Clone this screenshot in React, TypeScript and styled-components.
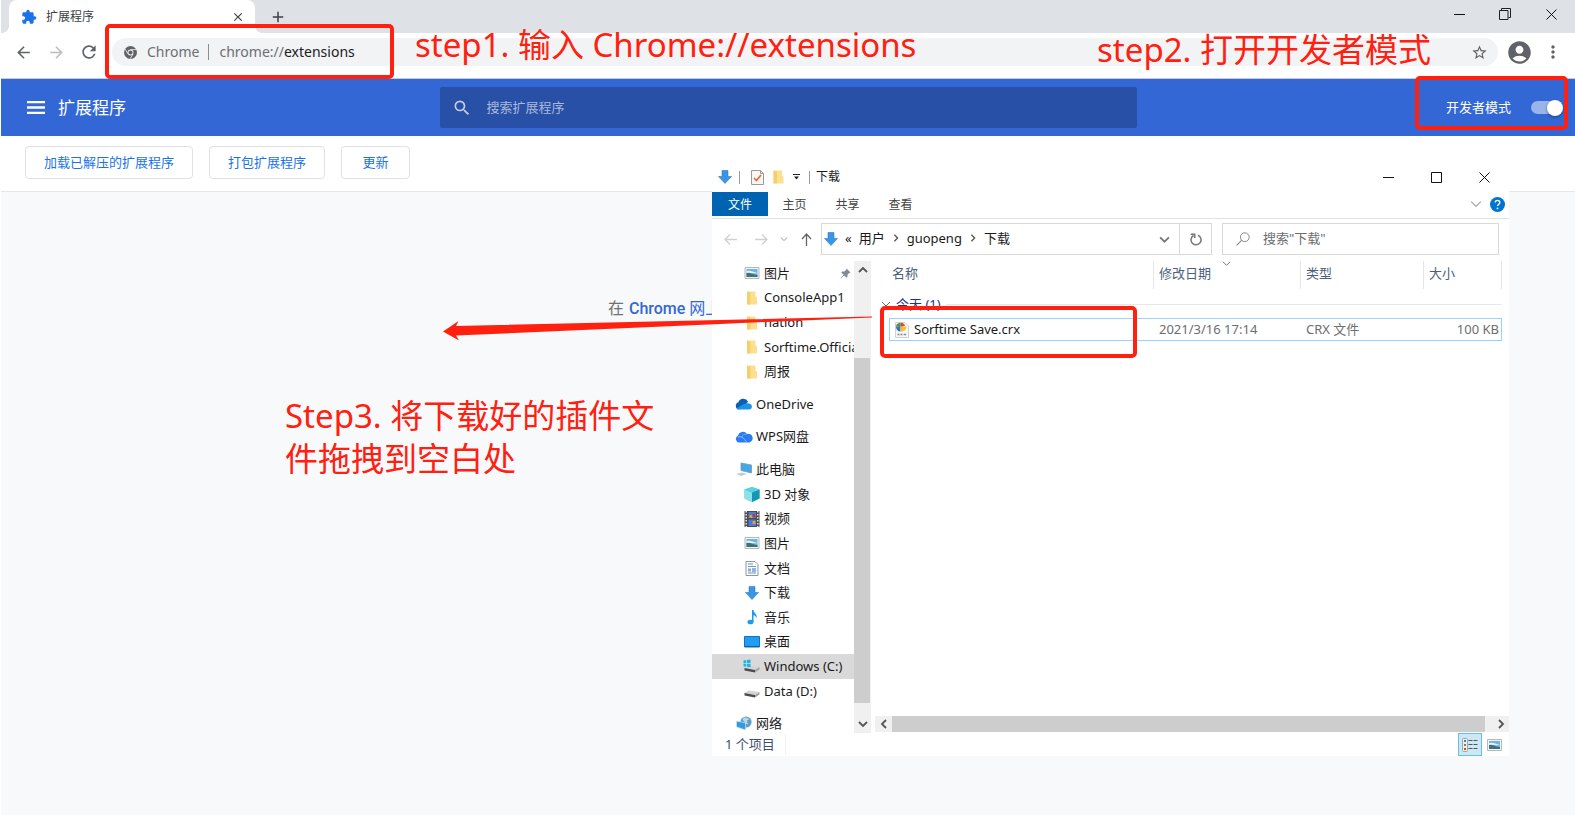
import React from "react";
import styled, { createGlobalStyle } from "styled-components";
import {
  MdExtension, MdArrowBack, MdArrowForward, MdRefresh, MdStarBorder,
  MdAccountCircle, MdMoreVert, MdSearch, MdClose, MdAdd,
} from "react-icons/md";

const RED = "#ff2010";

const GlobalStyle = createGlobalStyle`
  *, *::before, *::after { box-sizing: border-box; }
  body {
    margin: 0;
    background: #f8f9fb;
    font-family: "Noto Sans", "Noto Sans CJK SC", sans-serif;
    font-size: 13px;
    line-height: 20px;
    overflow-x: hidden;
  }
  button, input { font: inherit; }
  a { color: inherit; text-decoration: none; }
  ul { list-style: none; margin: 0; padding: 0; }
  svg { display: block; flex: none; }
`;

const Page = styled.div`
  position: relative;
  min-height: 100vh;
  border-left: 1px solid #fff;
  overflow: hidden;
`;

const PlainButton = styled.button`
  display: flex;
  align-items: center;
  justify-content: center;
  padding: 0;
  border: 0;
  background: none;
  color: inherit;
`;

/* ---------- browser frame ---------- */

const TabStrip = styled.div`
  display: flex;
  height: 33px;
  padding: 0 1px 0 8px;
  background: #dee1e6;
`;

const Tab = styled.div`
  position: relative;
  display: flex;
  align-items: center;
  gap: 9px;
  width: 246px;
  padding: 0 10px 0 12px;
  border-radius: 8px 8px 0 0;
  background: #fff;
  color: #3c4043;
  font-size: 12px;
  &::before, &::after {
    content: "";
    position: absolute;
    bottom: 0;
    width: 8px;
    height: 8px;
  }
  &::before { left: -8px; background: radial-gradient(circle at 0 0, transparent 8px, #fff 8px); }
  &::after { right: -8px; background: radial-gradient(circle at 100% 0, transparent 8px, #fff 8px); }
`;

const TabTitle = styled.span`
  flex: 1;
`;

const NewTab = styled(PlainButton)`
  width: 28px;
  margin-left: 9px;
  color: #3c4043;
`;

const WindowButtons = styled.div<{ $cell: number }>`
  display: flex;
  margin-left: auto;
  button { width: ${(p) => p.$cell}px; height: 28px; }
`;

const Toolbar = styled.div`
  display: flex;
  align-items: center;
  height: 46px;
  padding: 0 12px 7px 12px;
  border-bottom: 1px solid #c9cbd2;
  background: #fff;
  color: #5f6368;
`;

const NavButton = styled(PlainButton)<{ $off?: boolean }>`
  width: 20px;
  height: 28px;
  margin-right: 13px;
  color: ${(p) => (p.$off ? "#bcbec2" : "#5f6368")};
`;

const Omnibox = styled.div`
  display: flex;
  flex: 1;
  align-items: center;
  height: 28px;
  padding: 0 10px 0 12px;
  border-radius: 14px;
  background: #f1f3f4;
  font-size: 14px;
`;

const SiteName = styled.span`
  margin-left: 10px;
  padding-right: 9px;
  border-right: 1px solid #8a8d91;
  color: #6b6f73;
  line-height: 16px;
`;

const Url = styled.span`
  flex: 1;
  margin-left: 10px;
  color: #6b6f73;
  b { color: #202124; font-weight: 400; }
`;

const AccountButton = styled(PlainButton)`
  margin: 0 10px 0 8px;
`;

/* ---------- extensions page ---------- */

const Header = styled.header`
  display: flex;
  align-items: center;
  height: 57px;
  padding: 0 15px;
  background: #3367d6;
  color: #fff;
`;

const HeaderSide = styled.div`
  display: flex;
  flex: 1;
  align-items: center;
`;

const MenuButton = styled(PlainButton)`
  margin: 0 13px 0 11px;
`;

const PageTitle = styled.h1`
  margin: 0;
  font-size: 17px;
  font-weight: 400;
  line-height: 24px;
`;

const SearchBox = styled.label`
  display: flex;
  flex: 0 1 697px;
  align-items: center;
  gap: 15px;
  height: 41px;
  padding: 0 12px;
  border-radius: 2px;
  background: #2850a7;
  color: #c3cfe8;
  input {
    flex: 1;
    min-width: 0;
    padding: 0 0 2px;
    border: 0;
    outline: 0;
    background: none;
    color: #fff;
  }
  input::placeholder { color: #a9b9dc; opacity: 1; }
`;

const DevMode = styled.label`
  display: flex;
  align-items: center;
  gap: 20px;
  margin-left: auto;
  span { padding-bottom: 2px; }
`;

const Switch = styled.input`
  appearance: none;
  display: flex;
  align-items: center;
  justify-content: flex-end;
  width: 29px;
  height: 13px;
  margin: 0;
  border-radius: 7px;
  background: #99b3eb;
  &::before {
    content: "";
    width: 16px;
    height: 16px;
    margin-right: -3px;
    border-radius: 50%;
    background: #fff;
    box-shadow: 0 1px 3px rgba(0, 0, 0, 0.4);
    flex: none;
  }
`;

const Actions = styled.div`
  display: flex;
  gap: 16px;
  height: 56px;
  padding: 10px 24px;
  border-bottom: 1px solid #e5e6e8;
  background: #fff;
`;

const ActionButton = styled.button`
  min-width: 69px;
  height: 33px;
  padding: 0 18px 2px;
  border: 1px solid #dfe1e5;
  border-radius: 4px;
  background: #fff;
  color: #1a73e8;
`;

const Empty = styled.p`
  width: 360px;
  margin: 105px auto 0;
  color: #6e7175;
  font-family: Roboto, "Noto Sans CJK SC", sans-serif;
  font-size: 16px;
  line-height: 24px;
  a { margin-left: 1px; color: #3367d6; font-weight: 500; }
  a span { font-weight: 400; }
`;

/* ---------- file manager window ---------- */

const Explorer = styled.section`
  position: absolute;
  left: 711px;
  top: 160px;
  width: 797px;
  background: #fff;
  color: #1a1a1a;
`;

const TitleBar = styled.div`
  display: flex;
  align-items: center;
  height: 32px;
  padding: 2px 1px 0 6px;
`;

const Divider = styled.i`
  width: 1px;
  height: 13px;
  background: #9a9a9a;
`;

const QuickTools = styled.div`
  display: flex;
  align-items: center;
  gap: 9px;
  margin: 0 9px 0 7px;
  i { margin-right: 2px; }
`;

const WindowTitle = styled.span`
  margin-left: 6px;
  font-size: 12px;
`;

const Ribbon = styled.nav`
  display: flex;
  align-items: center;
  height: 27px;
  padding: 0 4px 2px 0;
  border-bottom: 1px solid #e2e2e2;
  color: #444;
`;

const RibbonTab = styled(PlainButton)<{ $active?: boolean }>`
  width: ${(p) => (p.$active ? 56 : 53)}px;
  height: 24px;
  padding-top: 2px;
  background: ${(p) => (p.$active ? "#0063b1" : "none")};
  color: ${(p) => (p.$active ? "#fff" : "#444")};
  font-size: 12px;
`;

const RibbonEnd = styled.div`
  display: flex;
  align-items: center;
  gap: 8px;
  margin-left: auto;
`;

const AddressRow = styled.div`
  display: flex;
  align-items: center;
  padding: 4px 10px 6px 12px;
`;

const History = styled.div`
  display: flex;
  align-items: center;
  width: 97px;
  gap: 12px;
  svg:first-child { margin-right: 6px; }
`;

const AddressBox = styled.div`
  display: flex;
  flex: 1;
  align-items: center;
  height: 32px;
  padding-left: 2px;
  border: 1px solid #d9d9d9;
  span { padding-bottom: 2px; }
`;

const Crumb = styled.span`
  margin: 0 7px;
`;

const RefreshButton = styled(PlainButton)`
  width: 32px;
  height: 30px;
  margin-left: 9px;
  border-left: 1px solid #d9d9d9;
`;

const FolderSearch = styled.label`
  display: flex;
  align-items: center;
  gap: 13px;
  width: 277px;
  height: 32px;
  margin-left: 10px;
  padding: 0 13px;
  border: 1px solid #d9d9d9;
  input { flex: 1; min-width: 0; padding: 0 0 2px; border: 0; outline: 0; }
  input::placeholder { color: #6d6d6d; opacity: 1; }
`;

const Panes = styled.div`
  display: flex;
  height: 472px;
`;

const Tree = styled.nav`
  width: 142px;
  overflow: hidden;
`;

const TreeList = styled.ul`
  display: flex;
  flex-direction: column;
  height: 475px;
`;

const TreeItem = styled.li<{ $top?: boolean; $selected?: boolean }>`
  flex: 1;
  display: flex;
  align-items: center;
  margin-top: ${(p) => (p.$top ? 8 : 0)}px;
  background: ${(p) => (p.$selected ? "#d9d9d9" : "none")};
  a {
    display: flex;
    flex: 1;
    align-items: center;
    gap: 3px;
    min-width: 0;
    padding-left: ${(p) => (p.$top ? 23 : 31)}px;
    white-space: nowrap;
  }
  a span { padding-bottom: 1px; }
  a > svg:first-child { width: 18px; }
  a > svg:last-child { margin: 0 3px 0 auto; }
`;

const VScroll = styled.div`
  display: flex;
  flex-direction: column;
  width: 17px;
  background: #f0f0f0;
  button { height: 18px; }
`;

const VThumb = styled.div`
  height: 345px;
  margin: 79px 1px 0 0;
  background: #cdcdcd;
`;

const Content = styled.div`
  display: flex;
  flex: 1;
  flex-direction: column;
  min-width: 0;
  padding-left: 4px;
`;

const TableArea = styled.div`
  flex: 1;
  padding: 0 7px 0 14px;
`;

const FileTable = styled.table`
  width: 100%;
  table-layout: fixed;
  border-spacing: 0;
  th, td { padding: 0 0 0 5px; text-align: left; font-weight: 400; }
`;

const ColumnHead = styled.th<{ $w?: number }>`
  position: relative;
  width: ${(p) => (p.$w ? p.$w + "px" : "auto")};
  height: 28px;
  border-right: 1px solid #e5e5e5;
  color: #4c607a;
  line-height: 24px;
  vertical-align: top;
  &:first-child { padding-left: 3px; }
  svg { position: absolute; left: calc(50% - 5px); top: -2px; }
`;

const GroupCell = styled.td`
  height: 29px;
  color: #1e3287;
  && { padding: 1px 0 0; }
`;

const GroupLabel = styled.div`
  display: flex;
  align-items: center;
  gap: 5px;
  margin-left: -8px;
  &::after { content: ""; flex: 1; height: 1px; background: #e8e8e8; }
`;

const FileCell = styled.td<{ $end?: boolean }>`
  height: 23px;
  border: solid #99d1ff;
  border-width: 1px 0;
  color: #6d6d6d;
  line-height: 21px;
  &:first-child { border-left-width: 1px; color: #1a1a1a; }
  &:last-child { border-right-width: 1px; }
  && { ${(p) => (p.$end ? "text-align: right; padding-right: 2px;" : "")} }
`;

const FileName = styled.a`
  display: flex;
  align-items: center;
  gap: 5px;
`;

const HScroll = styled.div`
  display: flex;
  height: 16px;
  margin-bottom: 1px;
  background: #f0f0f0;
  button { width: 17px; }
`;

const HThumb = styled.div`
  flex: 1;
  margin-right: 7px;
  background: #cdcdcd;
`;

const StatusBar = styled.footer`
  display: flex;
  align-items: center;
  height: 23px;
  padding: 0 3px 0 13px;
  color: #3b4f6b;
`;

const StatusText = styled.span`
  padding: 0 10px 1px 0;
  border-right: 1px solid #f3f3f3;
`;

const ViewButton = styled(PlainButton)<{ $active?: boolean }>`
  width: 24px;
  height: 23px;
  border: ${(p) => (p.$active ? "1px solid #66c0e0" : "0")};
  background: ${(p) => (p.$active ? "#cce8f6" : "none")};
`;

const Spacer = styled.span`
  flex: 1;
`;

/* ---------- tutorial marks drawn over the page ---------- */

const Mark = styled.div`
  position: absolute;
  border: 4px solid ${RED};
  border-radius: 5px;
  pointer-events: none;
`;
const AddressMark = styled(Mark)`left: 104px; top: 24px; width: 289px; height: 55px;`;
const SwitchMark = styled(Mark)`right: 7px; top: 76px; width: 153px; height: 54px;`;
const FileMark = styled(Mark)`left: 879px; top: 306px; width: 257px; height: 52px;`;

const Note = styled.p`
  position: absolute;
  margin: 0;
  color: ${RED};
  font-size: 33px;
  line-height: 43px;
  white-space: nowrap;
`;
const AddressNote = styled(Note)`left: 414px; top: 23px;`;
const SwitchNote = styled(Note)`right: 144px; top: 28px;`;
const DragNote = styled(Note)`left: 284px; top: 394px;`;

const DragArrow = styled.svg`
  position: absolute;
  left: 441px;
  top: 315px;
`;

/* ---------- icons ---------- */

const ChromeGlyph = () => (
  <svg width="13" height="13" viewBox="0 0 24 24">
    <circle cx="12" cy="12" r="12" fill="#5f6368" />
    <circle cx="12" cy="12" r="5.4" fill="#f1f3f4" />
    <circle cx="12" cy="12" r="3.8" fill="#5f6368" />
    <path d="M12 6.6h11M7.3 14.7 2 5.6M16.7 14.7l-5.2 9" stroke="#f1f3f4" strokeWidth="1.5" fill="none" />
  </svg>
);

const Burger = () => (
  <svg width="18" height="13" viewBox="0 0 18 13" fill="#fff">
    <path d="M0 0h18v2.300H0zM0 5.300h18v2.400H0zM0 10.700h18V13H0z" />
  </svg>
);

const Minimize = () => (
  <svg width="11" height="11" viewBox="0 0 11 11"><path d="M0 5.500h11" stroke="#111" /></svg>
);
const Maximize = () => (
  <svg width="11" height="11" viewBox="0 0 11 11"><path d="M.5.5h10v10H.5z" fill="none" stroke="#111" /></svg>
);
const Restore = () => (
  <svg width="12" height="12" viewBox="0 0 12 12"><path d="M.5 2.500h8.500v9H.5zM2.500 2V.5h9v9H9.500" fill="none" stroke="#222" /></svg>
);
const Cross = () => (
  <svg width="11" height="11" viewBox="0 0 11 11"><path d="M.5.5l10 10M10.500.5l-10 10" stroke="#111" fill="none" /></svg>
);

type ChevronProps = { dir: "up" | "down" | "left" | "right"; size?: number; color?: string; weight?: number };

const Chevron = ({ dir, size = 8, color = "#555", weight = 1.3 }: ChevronProps) => {
  const d = { down: "M1 3l4 4 4-4", up: "M1 7l4-4 4 4", left: "M7 1L3 5l4 4", right: "M3 1l4 4-4 4" }[dir];
  return (
    <svg width={size} height={size} viewBox="0 0 10 10"><path d={d} fill="none" stroke={color} strokeWidth={(weight * 10) / size} /></svg>
  );
};

const LongArrow = ({ d, color }: { d: string; color: string }) => (
  <svg width="13" height="13" viewBox="0 0 13 13"><path d={d} fill="none" stroke={color} strokeWidth="1.3" /></svg>
);

const DownArrow = () => (
  <svg width="14" height="14" viewBox="0 0 14 14">
    <path d="M4 .5h6v6h3.500L7 13.500.5 6.500H4z" fill="#3d94e0" stroke="#2a7fcb" strokeWidth=".6" />
  </svg>
);

const Checklist = () => (
  <svg width="13" height="15" viewBox="0 0 13 15">
    <path d="M.5.5h9l3 3v11H.5z" fill="#f6f6f6" stroke="#9a9a9a" />
    <path d="M9.500.5v3h3" fill="none" stroke="#9a9a9a" />
    <path d="M3 8l2.500 2.500L10 5" fill="none" stroke="#f0692c" strokeWidth="1.700" />
  </svg>
);

const Folder = () => (
  <svg width="11" height="14" viewBox="0 0 11 14">
    <path d="M.5.500h8.500v5l1.500 1v7H.5z" fill="#fbe08f" />
    <path d="M.5.5 4 1.500v12H.5z" fill="#f5cf6d" />
  </svg>
);

const Picture = () => (
  <svg width="15" height="12" viewBox="0 0 15 12">
    <path d="M.5.5h14v11H.5z" fill="#f4f4f4" stroke="#b3b9bf" />
    <path d="M2 2h11v8H2z" fill="#6fb4e8" />
    <path d="M2 6c3-1 5 1.500 11 2v2H2z" fill="#3f7373" />
    <path d="M2 4.200c3-1.400 6 .3 11 1.800-4 .6-8-.6-11 0z" fill="#e8f3fa" />
  </svg>
);

const OneDrive = () => (
  <svg width="18" height="12" viewBox="0 0 18 12">
    <path d="M4 11.500a3.700 3.700 0 0 1-.6-7.200A5.300 5.300 0 0 1 13 3.500l-3 4.500z" fill="#0a5fb8" />
    <path d="M1.500 10.500 8 6.500c2-1 4-2 7-.8a3 3 0 0 1-.7 5.800H4a3.700 3.700 0 0 1-2.500-1z" fill="#1c93e6" />
  </svg>
);

const WpsCloud = () => (
  <svg width="18" height="12" viewBox="0 0 18 12">
    <path d="M4 11.500A3.500 3.500 0 0 1 3 4.800 5 5 0 0 1 12 3a4.300 4.300 0 0 1 2.500 8.500z" fill="#2a7cf0" />
    <path d="M3 6c3-1 5 .5 6.500 2.500L11.500 11" fill="none" stroke="#a9ccff" strokeWidth=".8" />
    <path d="M6.500 6c1-2 3-3 5.500-3" fill="none" stroke="#7fb2fb" strokeWidth=".8" />
  </svg>
);

const Computer = () => (
  <svg width="18" height="15" viewBox="0 0 18 15">
    <path d="M6 1l10.500 2v8L6 8.500z" fill="#3fa9ea" stroke="#8496a3" strokeWidth=".8" />
    <path d="M1 12l6-1.500 5 1.500-6 2z" fill="#c5cbd0" />
  </svg>
);

const Cube = () => (
  <svg width="16" height="15" viewBox="0 0 16 15">
    <path d="M8 0l7.500 2.500v9L8 15 .5 11.500v-9z" fill="#2fc3d6" />
    <path d="M8 5.500V15L.5 11.500v-9z" fill="#8ae3ea" />
    <path d="M8 5.500V15l7.500-3.500v-9z" fill="#1795b8" />
    <path d="M8 0l7.500 2.500L8 5.500.5 2.500z" fill="#59d3de" />
  </svg>
);

const Film = () => (
  <svg width="15" height="16" viewBox="0 0 15 16">
    <path d="M0 0h15v16H0z" fill="#4b4b4b" />
    <path d="M4 1h7.500v6H4zM4 8.500h7.500V15H4z" fill="#4f79d6" />
    <path d="M5 4h3v3H5zM8 10h3v3H8z" fill="#e1a03c" />
    <path d="M8 3h2.500v3H8z" fill="#c0392b" />
    <path d="M1.700 0v16M13.300 0v16" stroke="#e8e8e8" strokeWidth="1.500" strokeDasharray="1.500 1.500" />
  </svg>
);

const Doc = () => (
  <svg width="13" height="15" viewBox="0 0 13 15">
    <path d="M.5.500h9l3 3v11H.5z" fill="#fafafa" stroke="#8f979e" />
    <path d="M2.500 3h5M2.500 5.500h8M2.500 12h8" stroke="#5d9fd8" />
    <path d="M2.500 7.500h3v3h-3z" fill="#9aa6b0" />
    <path d="M6.500 8h4M6.500 10h4" stroke="#2d6fb8" />
  </svg>
);

const MusicNote = () => (
  <svg width="12" height="15" viewBox="0 0 12 15">
    <ellipse cx="4.500" cy="12" rx="3" ry="2.300" fill="#1a9bf0" />
    <path d="M6 0h1.500c0 3 4 3.500 3 8.500-.5-2-1.500-3-3-3.300V12H6z" fill="#1a9bf0" />
  </svg>
);

const DesktopIcon = () => (
  <svg width="16" height="12" viewBox="0 0 16 12">
    <path d="M.5.5h15v10.500H.5z" fill="#1f9cf3" stroke="#1372bd" />
    <path d="M1 10.500h14" stroke="#0e5c9c" />
  </svg>
);

const Drive = ({ win }: { win?: boolean }) => (
  <svg width="17" height="14" viewBox="0 0 17 14">
    <path d="M1 9l4-2.500 11 1.500-4.500 3z" fill="#d4d4d4" />
    <path d="M1 9l10.500 2v2.500L1 11.500z" fill="#4c4c4c" />
    <path d="M11.500 11 16 8v2.500l-4.500 3z" fill="#a2a2a2" />
    {win && <path d="M0 1.500 2.700 1v3H0zM3.500 1 7 .4V4H3.500zM0 4.700h2.700v3L0 7.300zM3.500 4.700H7v3.600l-3.500-.5z" fill="#19b5e6" />}
  </svg>
);

const Network = () => (
  <svg width="17" height="15" viewBox="0 0 17 15">
    <circle cx="10.500" cy="6" r="5.600" fill="#5f9fc4" />
    <path d="M7 3c2-2 5-2 7 1-3-1-3 3-1 4-2 1-4-1-6-5z" fill="#b7d7e6" />
    <path d="M1 5l9 2v7L1 11z" fill="#2f9be6" stroke="#d8ecf8" strokeWidth=".6" />
  </svg>
);

const Pin = () => (
  <svg width="11" height="11" viewBox="0 0 11 11">
    <path d="M6.500.5l4 4-1.200.4L7.600 6.600l-.2 2.200-.9.900-2.300-2.300L.8 10.500l-.3-.3 3.100-3.400-2.300-2.300.9-.9 2.200-.2L6.100 1.700z" fill="#7f8c99" />
  </svg>
);

const Help = () => (
  <svg width="15" height="15" viewBox="0 0 15 15">
    <circle cx="7.500" cy="7.500" r="7.500" fill="#0074d1" />
    <path d="M5.300 5.500c0-3 4.500-2.700 4.500 0 0 1.700-2.200 1.700-2.200 3.600" fill="none" stroke="#fff" strokeWidth="1.400" />
    <circle cx="7.500" cy="11.400" r=".9" fill="#fff" />
  </svg>
);

const RefreshGlyph = () => (
  <svg width="12" height="13" viewBox="0 0 12 13">
    <path d="M8 2.200a5 5 0 1 1-4.500.3" fill="none" stroke="#777" strokeWidth="1.500" />
    <path d="M.8 1.200h3.900V5" fill="none" stroke="#777" strokeWidth="1.500" />
  </svg>
);

const Lens = () => (
  <svg width="14" height="14" viewBox="0 0 14 14">
    <circle cx="8.800" cy="5.200" r="4.400" fill="none" stroke="#888" />
    <path d="M5.600 8.400.6 13.400" stroke="#888" strokeWidth="1.200" />
  </svg>
);

const CrxFile = () => (
  <svg width="14" height="16" viewBox="0 0 14 16">
    <path d="M.5.500h9.500l3.500 3.500v11.500H.5z" fill="#f7f7f7" stroke="#d0d0d0" />
    <path d="M1 4.500 5.500 5v4.500C3 9.500 1 7.500 1 4.500z" fill="#3a6fd0" />
    <path d="M1 4.500C1 2.500 2.500 1 5.500.8V5z" fill="#3f9a4a" />
    <path d="M5.500.8c2.500-.2 4 1.200 4.500 3L5.500 5z" fill="#d94a35" />
    <path d="M5.500 5 11.500 4.500C11.500 7.500 9 9.500 5.500 9.500z" fill="#f2c230" />
    <path d="M2.500 12.500h2M5.500 12.500h2M8.700 12.500h2.500" stroke="#888" strokeWidth="1.500" />
  </svg>
);

const DetailsView = () => (
  <svg width="16" height="14" viewBox="0 0 16 14">
    <rect x=".5" y=".5" width="5" height="13" rx="1" fill="#eee" stroke="#a5a5a5" />
    <path d="M2 2h2v2H2z" fill="#4a7ec0" />
    <path d="M2 6h2v2H2z" fill="#6c8f4a" />
    <path d="M2 10h2v2H2z" fill="#c0502a" />
    <path d="M6.500 2.500h9M6.500 6.500h9M6.500 10.500h9" stroke="#555" strokeDasharray="4 1" />
  </svg>
);

/* ---------- data ---------- */

type Place = { label: string; icon: React.ReactNode; top?: boolean; selected?: boolean; pinned?: boolean };

const places: Place[] = [
  { label: "图片", icon: <Picture />, pinned: true },
  { label: "ConsoleApp1", icon: <Folder /> },
  { label: "nation", icon: <Folder /> },
  { label: "Sorftime.Official", icon: <Folder /> },
  { label: "周报", icon: <Folder /> },
  { label: "OneDrive", icon: <OneDrive />, top: true },
  { label: "WPS网盘", icon: <WpsCloud />, top: true },
  { label: "此电脑", icon: <Computer />, top: true },
  { label: "3D 对象", icon: <Cube /> },
  { label: "视频", icon: <Film /> },
  { label: "图片", icon: <Picture /> },
  { label: "文档", icon: <Doc /> },
  { label: "下载", icon: <DownArrow /> },
  { label: "音乐", icon: <MusicNote /> },
  { label: "桌面", icon: <DesktopIcon /> },
  { label: "Windows (C:)", icon: <Drive win />, selected: true },
  { label: "Data (D:)", icon: <Drive /> },
  { label: "网络", icon: <Network />, top: true },
];

function FileExplorer() {
  return (
    <Explorer aria-label="下载">
      <TitleBar>
        <DownArrow />
        <QuickTools>
          <Divider />
          <Checklist />
          <Folder />
          <svg width="7" height="6" viewBox="0 0 7 6"><path d="M0 .5h7" stroke="#222" /><path d="M1 2.500h5L3.500 5.500z" fill="#222" /></svg>
        </QuickTools>
        <Divider />
        <WindowTitle>下载</WindowTitle>
        <WindowButtons $cell={48}>
          <PlainButton aria-label="最小化"><Minimize /></PlainButton>
          <PlainButton aria-label="最大化"><Maximize /></PlainButton>
          <PlainButton aria-label="关闭"><Cross /></PlainButton>
        </WindowButtons>
      </TitleBar>
      <Ribbon>
        <RibbonTab $active>文件</RibbonTab>
        <RibbonTab>主页</RibbonTab>
        <RibbonTab>共享</RibbonTab>
        <RibbonTab>查看</RibbonTab>
        <RibbonEnd>
          <Chevron dir="down" size={12} color="#a8a8a8" />
          <Help />
        </RibbonEnd>
      </Ribbon>
      <AddressRow>
        <History>
          <LongArrow d="M13 6.500H1M6 1.500l-5 5 5 5" color="#d0d0d0" />
          <LongArrow d="M0 6.500h12M7 1.500l5 5-5 5" color="#d0d0d0" />
          <Chevron dir="down" size={8} color="#c4c4c4" />
          <LongArrow d="M6.500 13V1M2 6l4.500-5L11 6" color="#666" />
        </History>
        <AddressBox>
          <DownArrow />
          <Crumb>«</Crumb>
          <span>用户</span>
          <Crumb><Chevron dir="right" /></Crumb>
          <span>guopeng</span>
          <Crumb><Chevron dir="right" /></Crumb>
          <span>下载</span>
          <Spacer />
          <Chevron dir="down" size={11} weight={1.8} color="#777" />
          <RefreshButton aria-label="刷新"><RefreshGlyph /></RefreshButton>
        </AddressBox>
        <FolderSearch>
          <Lens />
          <input type="text" aria-label="搜索下载" placeholder={'搜索"下载"'} />
        </FolderSearch>
      </AddressRow>
      <Panes>
        <Tree>
          <TreeList>
            {places.map((place, i) => (
              <TreeItem key={i} $top={place.top} $selected={place.selected}>
                <a href="#">
                  {place.icon}
                  <span>{place.label}</span>
                  {place.pinned && <Pin />}
                </a>
              </TreeItem>
            ))}
          </TreeList>
        </Tree>
        <VScroll>
          <PlainButton aria-label="向上滚动"><Chevron dir="up" size={10} weight={1.8} /></PlainButton>
          <VThumb />
          <Spacer />
          <PlainButton aria-label="向下滚动"><Chevron dir="down" size={10} weight={1.8} /></PlainButton>
        </VScroll>
        <Content>
          <TableArea>
            <FileTable>
              <thead>
                <tr>
                  <ColumnHead>名称</ColumnHead>
                  <ColumnHead $w={147}>修改日期<Chevron dir="down" size={9} color="#777" weight={1} /></ColumnHead>
                  <ColumnHead $w={123}>类型</ColumnHead>
                  <ColumnHead $w={78}>大小</ColumnHead>
                </tr>
              </thead>
              <tbody>
                <tr>
                  <GroupCell colSpan={4}>
                    <GroupLabel><Chevron dir="down" size={10} color="#666" weight={1} />今天 (1)</GroupLabel>
                  </GroupCell>
                </tr>
                <tr>
                  <FileCell><FileName href="#"><CrxFile />Sorftime Save.crx</FileName></FileCell>
                  <FileCell>2021/3/16 17:14</FileCell>
                  <FileCell>CRX 文件</FileCell>
                  <FileCell $end>100 KB</FileCell>
                </tr>
              </tbody>
            </FileTable>
          </TableArea>
          <HScroll>
            <PlainButton aria-label="向左滚动"><Chevron dir="left" size={10} weight={1.8} /></PlainButton>
            <HThumb />
            <PlainButton aria-label="向右滚动"><Chevron dir="right" size={10} weight={1.8} /></PlainButton>
          </HScroll>
        </Content>
      </Panes>
      <StatusBar>
        <StatusText>1 个项目</StatusText>
        <Spacer />
        <ViewButton $active aria-label="详细信息"><DetailsView /></ViewButton>
        <ViewButton aria-label="大缩略图"><Picture /></ViewButton>
      </StatusBar>
    </Explorer>
  );
}

export default function App() {
  return (
    <Page>
      <GlobalStyle />
      <TabStrip>
        <Tab>
          <MdExtension size={16} color="#1a73e8" />
          <TabTitle>扩展程序</TabTitle>
          <PlainButton aria-label="关闭标签页"><MdClose size={14} /></PlainButton>
        </Tab>
        <NewTab aria-label="新标签页"><MdAdd size={18} /></NewTab>
        <WindowButtons $cell={46}>
          <PlainButton aria-label="最小化"><Minimize /></PlainButton>
          <PlainButton aria-label="还原"><Restore /></PlainButton>
          <PlainButton aria-label="关闭"><Cross /></PlainButton>
        </WindowButtons>
      </TabStrip>
      <Toolbar>
        <NavButton aria-label="后退"><MdArrowBack size={19} /></NavButton>
        <NavButton aria-label="前进" $off><MdArrowForward size={19} /></NavButton>
        <NavButton aria-label="重新加载"><MdRefresh size={20} /></NavButton>
        <Omnibox>
          <ChromeGlyph />
          <SiteName>Chrome</SiteName>
          <Url>chrome://<b>extensions</b></Url>
          <PlainButton aria-label="收藏"><MdStarBorder size={17} /></PlainButton>
        </Omnibox>
        <AccountButton aria-label="账户"><MdAccountCircle size={27} /></AccountButton>
        <PlainButton aria-label="菜单"><MdMoreVert size={20} /></PlainButton>
      </Toolbar>
      <Header>
        <HeaderSide>
          <MenuButton aria-label="主菜单"><Burger /></MenuButton>
          <PageTitle>扩展程序</PageTitle>
        </HeaderSide>
        <SearchBox>
          <MdSearch size={20} />
          <input type="text" aria-label="搜索扩展程序" placeholder="搜索扩展程序" />
        </SearchBox>
        <HeaderSide>
          <DevMode>
            <span>开发者模式</span>
            <Switch type="checkbox" role="switch" defaultChecked />
          </DevMode>
        </HeaderSide>
      </Header>
      <Actions>
        <ActionButton>加载已解压的扩展程序</ActionButton>
        <ActionButton>打包扩展程序</ActionButton>
        <ActionButton>更新</ActionButton>
      </Actions>
      <Empty>在 <a href="#">Chrome <span>网上</span></a></Empty>
      <FileExplorer />
      <AddressMark />
      <SwitchMark />
      <FileMark />
      <AddressNote>step1. 输入 Chrome://extensions</AddressNote>
      <SwitchNote>step2. 打开开发者模式</SwitchNote>
      <DragNote>Step3. 将下载好的插件文<br />件拖拽到空白处</DragNote>
      <DragArrow width="432" height="28" viewBox="442 315 432 28" fill={RED}>
        <path d="M443 331.500 458.500 321l-2.500 5 264-6 152-3.500v1l-152 6.500-264 11.500 3 5z" />
      </DragArrow>
    </Page>
  );
}
